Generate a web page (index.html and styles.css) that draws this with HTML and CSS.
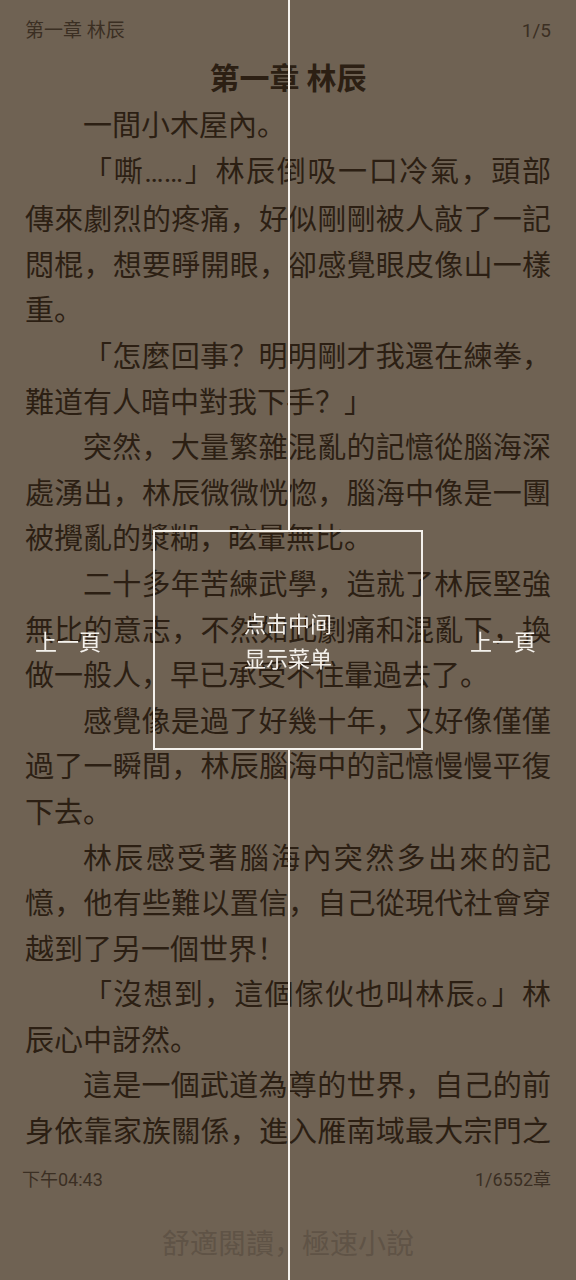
FILE: index.html
```html
<!DOCTYPE html>
<html lang="zh-CN">
<head>
    <meta charset="UTF-8">
    <meta name="viewport" content="width=device-width, initial-scale=1.0">
    <title>第一章 林辰</title>
    <link rel="stylesheet" href="styles.css">
</head>
<body>
    <div class="reader">
        <div class="top-bar">
            <span>第一章 林辰</span>
            <span>1/5</span>
        </div>

        <div class="page">
            <h1 class="chapter-title">第一章 林辰</h1>
            <p>一間小木屋內。</p>
            <p>「嘶<span class="dots">……</span>」林辰倒吸一口冷氣，頭部傳來劇烈的疼痛，好似剛剛被人敲了一記悶棍，想要睜開眼，卻感覺眼皮像山一樣重。</p>
            <p>「怎麼回事？明明剛才我還在練拳，難道有人暗中對我下手？」</p>
            <p>突然，大量繁雜混亂的記憶從腦海深處湧出，林辰微微恍惚，腦海中像是一團被攪亂的漿糊，眩暈無比。</p>
            <p>二十多年苦練武學，造就了林辰堅強無比的意志，不然如此劇痛和混亂下，換做一般人，早已承受不住暈過去了。</p>
            <p>感覺像是過了好幾十年，又好像僅僅過了一瞬間，林辰腦海中的記憶慢慢平復下去。</p>
            <p>林辰感受著腦海內突然多出來的記憶，他有些難以置信，自己從現代社會穿越到了另一個世界！</p>
            <p>「沒想到，這個傢伙也叫林辰。」林辰心中訝然。</p>
            <p class="cut">這是一個武道為尊的世界，自己的前身依靠家族關係，進入雁南域最大宗門之</p>
        </div>

        <div class="bottom-bar">
            <span>下午04:43</span>
            <span>1/6552章</span>
        </div>

        <div class="slogan">舒適閱讀，極速小說</div>
    </div>

    <!-- 首次进入的点击区域提示 -->
    <div class="guide">
        <div class="guide-line top"></div>
        <div class="guide-line bottom"></div>
        <div class="guide-side left">上一頁</div>
        <div class="guide-side right">上一頁</div>
        <div class="guide-center">
            <div>点击中间</div>
            <div>显示菜单</div>
        </div>
    </div>
</body>
</html>
```

FILE: styles.css
```css
:root {
    --bg: #6f6253;
    --ink: #2c1f13;
    --muted: #3b2f23;
    --hint: #f4f1ec;
}

body {
    margin: 0;
    padding: 0;
    background: var(--bg);
    font-family: "Noto Sans CJK SC", "Noto Sans CJK TC", "Noto Sans", sans-serif;
    color: var(--ink);
}

.reader {
    height: 1280px;
    display: flex;
    flex-direction: column;
    overflow: hidden;
}

.top-bar,
.bottom-bar {
    display: flex;
    justify-content: space-between;
    color: var(--muted);
    font-family: Roboto, "Noto Sans CJK SC", sans-serif;
}

.top-bar {
    padding: 18px 25px 0;
    font-size: 19px;
    line-height: 25px;
}

.page {
    padding: 0 25px;
    height: 1130px;
    overflow: hidden;
}

.chapter-title {
    margin: 13px 0 5px;
    font-size: 30px;
    line-height: 40px;
    text-align: center;
    font-weight: bold;
}

.page p {
    margin: 0;
    font-size: 29px;
    line-height: 45.6px;
    text-indent: 2em;
    text-align: justify;
}

.page p.cut {
    text-align-last: justify;
}

.dots {
    font-family: Roboto, sans-serif;
}

.bottom-bar {
    margin-top: -5px;
    padding: 0 25px 0 22px;
    font-size: 18px;
    line-height: 24px;
}

.slogan {
    margin-top: 30px;
    text-align: center;
    font-size: 28px;
    color: #5f5346;
}

.guide {
    position: fixed;
    top: 0;
    left: 0;
    width: 576px;
    height: 1280px;
    color: var(--hint);
}

.guide-line {
    position: absolute;
    left: 288px;
    width: 2px;
    background: var(--hint);
}

.guide-line.top {
    top: 0;
    height: 531px;
}

.guide-line.bottom {
    top: 748px;
    bottom: 0;
}

.guide-side {
    position: absolute;
    top: 625px;
    font-size: 22px;
    line-height: 30px;
}

.guide-side.left {
    left: 35px;
}

.guide-side.right {
    left: 470px;
}

.guide-center {
    position: absolute;
    left: 153px;
    top: 530px;
    width: 266px;
    height: 216px;
    border: 2px solid var(--hint);
    display: flex;
    flex-direction: column;
    justify-content: center;
    align-items: center;
    font-size: 22px;
    line-height: 35px;
}
```
